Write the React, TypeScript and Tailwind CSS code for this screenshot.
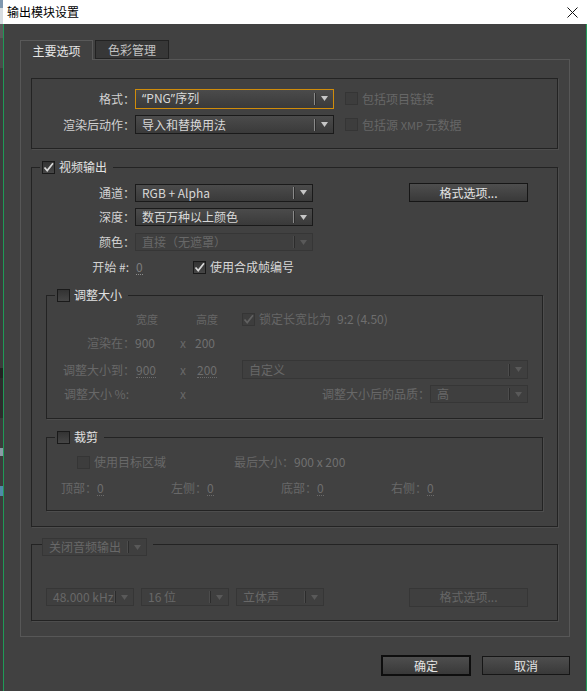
import React from "react";

function Arrow({ dim }: { dim?: boolean }) {
  return (
    <svg width="7" height="5" viewBox="0 0 7 5" className="block">
      <path d="M0 0H7L3.5 5Z" fill={dim ? "#595959" : "#c6c6c6"} />
    </svg>
  );
}

type SelProps = {
  w: string;
  h: string;
  text: React.ReactNode;
  disabled?: boolean;
  focus?: boolean;
};

function Select({ w, h, text, disabled, focus }: SelProps) {
  const border = focus
    ? "border-[#d08c0a]"
    : disabled
    ? "border-[#363636]"
    : "border-[#1a1a1a]";
  const bg = disabled
    ? "bg-[#3f3f3f]"
    : "bg-linear-to-b from-[#4b4b4b] to-[#3a3a3a]";
  const color = disabled ? "text-[#686868]" : "text-[#d8d8d8]";
  return (
    <div className={`flex items-center border ${border} ${bg} ${w} ${h}`}>
      <span className={`min-w-0 flex-1 truncate pl-[6px] ${color}`}>{text}</span>
      <span className={`h-[12px] w-px ${disabled ? "bg-[#4c4c4c]" : "bg-[#8a8a8a]"}`} />
      <span className="h-[12px] w-px bg-[#2c2c2c]" />
      <span className="flex w-[17px] justify-center">
        <Arrow dim={disabled} />
      </span>
    </div>
  );
}

function Check({ checked, disabled }: { checked?: boolean; disabled?: boolean }) {
  return (
    <span
      className={`flex h-[13px] w-[13px] shrink-0 items-center justify-center border ${
        disabled
          ? "border-[#353535] bg-[#3d3d3d]"
          : "border-[#1a1a1a] bg-linear-to-b from-[#333333] to-[#464646]"
      }`}
    >
      {checked && (
        <svg width="11" height="11" viewBox="0 0 11 11" className="block">
          <path
            d="M1.5 5.5L4.2 8.6L10 1.2"
            stroke={disabled ? "#616161" : "#d8d8d8"}
            strokeWidth="1.7"
            fill="none"
          />
        </svg>
      )}
    </span>
  );
}

function Btn({
  w,
  h,
  text,
  disabled,
  primary,
}: {
  w: string;
  h: string;
  text: string;
  disabled?: boolean;
  primary?: boolean;
}) {
  const border = disabled
    ? "border border-[#363636] bg-[#3f3f3f] text-[#666666]"
    : primary
    ? "border-2 border-[#0e0e0e] bg-linear-to-b from-[#4e4e4e] to-[#393939] text-[#e4e4e4]"
    : "border border-[#161616] bg-linear-to-b from-[#4e4e4e] to-[#393939] text-[#e4e4e4]";
  return (
    <div className={`flex items-center justify-center ${border} ${w} ${h}`}>{text}</div>
  );
}

function Dotted({ children, dim }: { children: React.ReactNode; dim?: boolean }) {
  return (
    <span
      className={`inline-block border-b border-dotted leading-[14px] ${
        dim ? "border-[#6a6a6a] text-[#6e6e6e]" : "border-[#8c8c8c] text-[#7c7c7c]"
      }`}
    >
      {children}
    </span>
  );
}

const groupBox = "border border-[#232323] shadow-[1px_1px_0_#4d4d4d]";

export default function App() {
  return (
    <div className="flex h-[691px] w-[587px] overflow-hidden whitespace-nowrap font-['Noto_Sans_CJK_SC','Noto_Sans',sans-serif] text-[12px] leading-[16px]">
      {/* strip of the window behind */}
      <div className="flex w-[3px] flex-col bg-[#3a3a3a]">
        <div className="h-[8px] bg-[#7f98b0]" />
        <div className="h-[16px] bg-[#d7dde2]" />
        <div className="h-[14px] bg-[#5a5a5a]" />
        <div className="h-[30px] bg-[#4a4a4a]" />
        <div className="h-[300px] bg-[#3b3b3b]" />
        <div className="h-[10px] bg-[#222222]" />
        <div className="h-[40px] bg-[#2c2c2c]" />
        <div className="h-[30px] bg-[#3b3b3b]" />
        <div className="h-[8px] bg-[#8a9aa5]" />
        <div className="h-[30px] bg-[#3b3b3b]" />
        <div className="h-[10px] bg-[#4f8aa8]" />
        <div className="flex-1 bg-[#3b3b3b]" />
      </div>

      <div className="flex w-[584px] flex-col">
        {/* title bar */}
        <div className="flex h-[24px] items-center justify-between bg-white pl-[4px] pr-[9px] text-black">
          <span>输出模块设置</span>
          <svg width="11" height="11" viewBox="0 0 11 11" className="block">
            <path d="M0.5 0.5L10.5 10.5M10.5 0.5L0.5 10.5" stroke="#111" strokeWidth="1" />
          </svg>
        </div>

        {/* body */}
        <div className="flex-1 border-x border-[#1f9a57] bg-[#414141] pl-[16px] pt-[16px]">
          {/* tabs */}
          <div className="flex h-[19px] items-start">
            <div className="relative z-10 -mb-[1px] flex h-[20px] w-[73px] items-center justify-center border-x border-t border-[#595959] bg-[#414141] text-[#e6e6e6]">
              主要选项
            </div>
            <div className="ml-[2px] flex h-[19px] w-[74px] items-center justify-center border border-[#222222] bg-[#373737] text-[#c2c2c2]">
              色彩管理
            </div>
          </div>

          {/* panel */}
          <div className="w-[550px] border border-[#575757] pb-[15px] pl-[10px] pt-[18px]">
            {/* group 1 */}
            <div className={`${groupBox} h-[71px] w-[527px] pt-[10px]`}>
              <div className="flex h-[19px] items-center">
                <span className="w-[103px] text-right text-[#d2d2d2]">格式：</span>
                <Select
                  w="w-[199px]"
                  h="h-[20px]"
                  focus
                  text={
                    <>
                      <span className="font-['Noto_Sans',sans-serif]">“</span>PNG
                      <span className="font-['Noto_Sans',sans-serif]">”</span>序列
                    </>
                  }
                />
                <span className="ml-[11px]">
                  <Check disabled />
                </span>
                <span className="ml-[4px] text-[#676767]">包括项目链接</span>
              </div>
              <div className="mt-[7px] flex h-[19px] items-center">
                <span className="w-[103px] text-right text-[#d2d2d2]">渲染后动作：</span>
                <Select w="w-[199px]" h="h-[19px]" text="导入和替换用法" />
                <span className="ml-[11px]">
                  <Check disabled />
                </span>
                <span className="ml-[4px] text-[#676767]">
                  包括源 <span className="text-[11px]">XMP</span> 元数据
                </span>
              </div>
            </div>

            {/* group 2: video */}
            <div className={`${groupBox} mt-[18px] w-[527px] pb-[15px]`}>
              <div className="-mt-[9px] ml-[8px] flex h-[16px] w-fit items-center gap-[4px] bg-[#414141] pl-[2px] pr-[6px] text-[#e2e2e2]">
                <Check checked />
                <span>视频输出</span>
              </div>

              <div className="mt-[8px] flex h-[19px] items-center">
                <span className="w-[103px] text-right text-[#d2d2d2]">通道：</span>
                <Select w="w-[178px]" h="h-[18px]" text="RGB + Alpha" />
                <span className="ml-[96px]">
                  <Btn w="w-[119px]" h="h-[19px]" text="格式选项..." />
                </span>
              </div>
              <div className="mt-[6px] flex h-[18px] items-center">
                <span className="w-[103px] text-right text-[#d2d2d2]">深度：</span>
                <Select w="w-[178px]" h="h-[18px]" text="数百万种以上颜色" />
              </div>
              <div className="mt-[7px] flex h-[18px] items-center">
                <span className="w-[103px] text-right text-[#d2d2d2]">颜色：</span>
                <Select w="w-[178px]" h="h-[18px]" disabled text="直接（无遮罩）" />
              </div>
              <div className="mt-[7px] flex h-[18px] items-center">
                <span className="w-[97px] text-right text-[#d2d2d2]">开始 #:</span>
                <span className="ml-[7px] w-[57px]">
                  <Dotted>0</Dotted>
                </span>
                <Check checked />
                <span className="ml-[4px] text-[#d8d8d8]">使用合成帧编号</span>
              </div>

              {/* group 3: resize */}
              <div className={`${groupBox} ml-[14px] mt-[19px] w-[497px] pb-[15px]`}>
                <div className="-mt-[9px] ml-[8px] flex h-[16px] w-fit items-center gap-[4px] bg-[#414141] pl-[2px] pr-[6px] text-[#e2e2e2]">
                  <Check />
                  <span>调整大小</span>
                </div>

                <div className="mt-[7px] flex h-[18px] items-center text-[#666666]">
                  <span className="w-[88px]" />
                  <span className="w-[45px] pl-[1px] text-[11px]">宽度</span>
                  <span className="w-[15px]" />
                  <span className="w-[47px] pl-[1px] text-[11px]">高度</span>
                  <Check checked disabled />
                  <span className="ml-[4px]">锁定长宽比为</span>
                  <span className="ml-[6px] text-[#6e6e6e]">9:2 (4.50)</span>
                </div>

                <div className="mt-[6px] flex h-[18px] items-center text-[#686868]">
                  <span className="w-[88px] text-right">渲染在：</span>
                  <span className="w-[45px] text-[#707070]">900</span>
                  <span className="w-[15px]">x</span>
                  <span className="w-[47px] text-[#707070]">200</span>
                </div>

                <div className="mt-[8px] flex h-[19px] items-center text-[#686868]">
                  <span className="w-[88px] text-right">调整大小到：</span>
                  <span className="w-[45px] pl-[1px]">
                    <Dotted dim>900</Dotted>
                  </span>
                  <span className="w-[15px]">x</span>
                  <span className="w-[47px] pl-[2px]">
                    <Dotted dim>200</Dotted>
                  </span>
                  <Select w="w-[286px]" h="h-[19px]" disabled text="自定义" />
                </div>

                <div className="mt-[6px] flex h-[18px] items-center text-[#686868]">
                  <span className="w-[88px] pr-[6px] text-right">调整大小 %:</span>
                  <span className="w-[45px]" />
                  <span className="w-[15px]">x</span>
                  <div className="flex w-[333px] items-center justify-end">
                    <span>调整大小后的品质：</span>
                    <Select w="w-[98px]" h="h-[18px]" disabled text="高" />
                  </div>
                </div>
              </div>

              {/* group 4: crop */}
              <div className={`${groupBox} ml-[14px] mt-[18px] w-[497px] pb-[13px]`}>
                <div className="-mt-[9px] ml-[8px] flex h-[16px] w-fit items-center gap-[4px] bg-[#414141] pl-[2px] pr-[6px] text-[#e2e2e2]">
                  <Check />
                  <span>裁剪</span>
                </div>

                <div className="ml-[30px] mt-[8px] flex h-[18px] items-center text-[#686868]">
                  <Check disabled />
                  <span className="ml-[4px] w-[72px] shrink-0">使用目标区域</span>
                  <span className="ml-[68px] shrink-0">最后大小：</span>
                  <span className="text-[#707070]">900 x 200</span>
                </div>

                <div className="ml-[14px] mt-[8px] flex h-[18px] items-center text-[#686868]">
                  <div className="flex w-[110px] shrink-0 items-center">
                    <span className="w-[36px] shrink-0">顶部：</span>
                    <Dotted dim>0</Dotted>
                  </div>
                  <div className="flex w-[110px] shrink-0 items-center">
                    <span className="w-[36px] shrink-0">左侧：</span>
                    <Dotted dim>0</Dotted>
                  </div>
                  <div className="flex w-[110px] shrink-0 items-center">
                    <span className="w-[36px] shrink-0">底部：</span>
                    <Dotted dim>0</Dotted>
                  </div>
                  <div className="flex w-[110px] shrink-0 items-center">
                    <span className="w-[36px] shrink-0">右侧：</span>
                    <Dotted dim>0</Dotted>
                  </div>
                </div>
              </div>
            </div>

            {/* group 5: audio */}
            <div className={`${groupBox} mt-[17px] w-[527px] pb-[14px]`}>
              <div className="-mt-[7px] ml-[10px] w-fit bg-[#414141] pr-[6px]">
                <Select w="w-[105px]" h="h-[18px]" disabled text="关闭音频输出" />
              </div>
              <div className="ml-[14px] mt-[32px] flex h-[18px] items-center">
                <Select w="w-[88px]" h="h-[18px]" disabled text="48.000 kHz" />
                <span className="ml-[7px]">
                  <Select w="w-[88px]" h="h-[18px]" disabled text="16 位" />
                </span>
                <span className="ml-[7px]">
                  <Select w="w-[88px]" h="h-[18px]" disabled text="立体声" />
                </span>
                <span className="ml-[85px]">
                  <Btn w="w-[119px]" h="h-[19px]" disabled text="格式选项..." />
                </span>
              </div>
            </div>
          </div>

          {/* footer buttons */}
          <div className="mt-[18px] flex w-[550px] items-center justify-end gap-[11px]">
            <Btn w="w-[90px]" h="h-[21px]" primary text="确定" />
            <Btn w="w-[88px]" h="h-[19px]" text="取消" />
          </div>
        </div>
      </div>
    </div>
  );
}
